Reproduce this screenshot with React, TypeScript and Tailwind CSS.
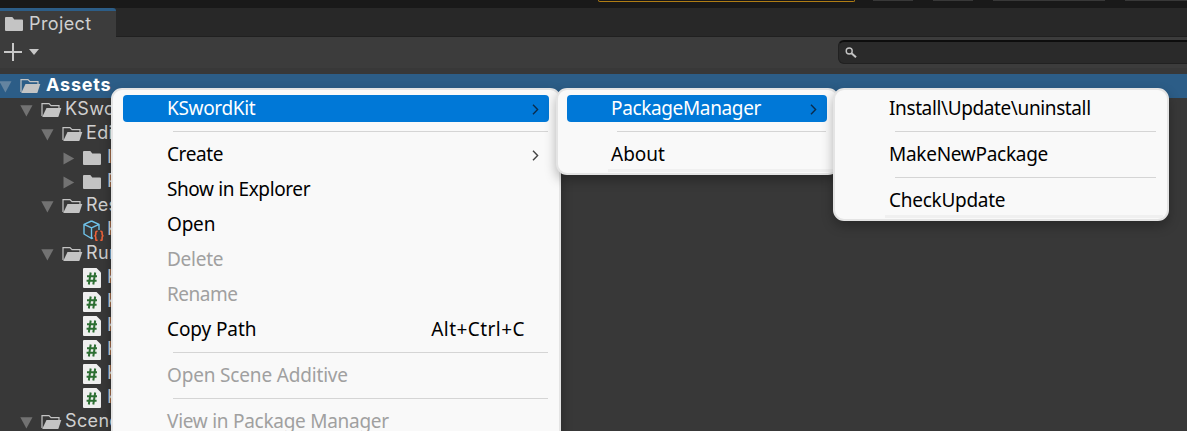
import React from "react";

type Entry =
  | { kind: "item"; label: string; track: string; shortcut?: string; sub?: boolean; active?: boolean; disabled?: boolean }
  | { kind: "sep" };

const mainMenu: Entry[] = [
  { kind: "item", label: "KSwordKit", track: "tracking-[-0.33px]", sub: true, active: true },
  { kind: "sep" },
  { kind: "item", label: "Create", track: "tracking-[-0.4px]", sub: true },
  { kind: "item", label: "Show in Explorer", track: "tracking-[-0.4px]" },
  { kind: "item", label: "Open", track: "tracking-[-0.2px]" },
  { kind: "item", label: "Delete", track: "tracking-[-0.25px]", disabled: true },
  { kind: "item", label: "Rename", track: "tracking-[-0.5px]", disabled: true },
  { kind: "item", label: "Copy Path", track: "tracking-[-0.1px]", shortcut: "Alt+Ctrl+C" },
  { kind: "sep" },
  { kind: "item", label: "Open Scene Additive", track: "tracking-[-0.17px]", disabled: true },
  { kind: "sep" },
  { kind: "item", label: "View in Package Manager", track: "tracking-[-0.27px]", disabled: true },
];

const packageMenu: Entry[] = [
  { kind: "item", label: "PackageManager", track: "tracking-[-0.36px]", sub: true, active: true },
  { kind: "sep" },
  { kind: "item", label: "About", track: "tracking-[0px]" },
];

const actionMenu: Entry[] = [
  { kind: "item", label: "Install\\Update\\uninstall", track: "tracking-[-0.38px]" },
  { kind: "sep" },
  { kind: "item", label: "MakeNewPackage", track: "tracking-[-0.28px]" },
  { kind: "sep" },
  { kind: "item", label: "CheckUpdate", track: "tracking-[-0.27px]" },
];

function Menu({ entries, className, strip }: { entries: Entry[]; className: string; strip?: boolean }) {
  return (
    <div
      className={`absolute top-[88px] rounded-[11px] border-2 border-[#e4e4e4] bg-[#f9f9f9] pt-px pr-[10px] pb-px shadow-[0_5px_12px_rgba(0,0,0,0.28)] ${className}`}
    >
      {strip && <div className="absolute right-[4px] bottom-[1px] left-[50px] h-[3px] bg-[#f0f0f0]" />}
      {entries.map((e, i) =>
        e.kind === "sep" ? (
          <div key={i} className="flex h-[11px] items-center pr-px pl-[50px]">
            <div className="h-px w-full bg-[#d5d5d5]" />
          </div>
        ) : (
          <div key={i} className="flex h-[35px] items-center">
            <div
              className={`flex h-[27px] w-full items-center justify-between rounded-[4px] pl-[44px] ${
                e.active ? "bg-[#0078d7] text-white" : e.disabled ? "text-[#a0a0a0]" : "text-black"
              }`}
            >
              <span className={e.track}>{e.label}</span>
              {e.shortcut && <span className="mr-[24px] tracking-[0.45px]">{e.shortcut}</span>}
              {e.sub && (
                <svg className="mt-px mr-[10px] h-[11px] w-[7px]" viewBox="0 0 7 11" fill="none">
                  <path d="M1 .8 5.6 5.5 1 10.2" stroke={e.active ? "#0b2d4c" : "#444"} strokeWidth="1.4" />
                </svg>
              )}
            </div>
          </div>
        ),
      )}
    </div>
  );
}

const OpenFolder = () => (
  <svg className="h-[16px] w-[21px] shrink-0" viewBox="0 0 21 16">
    <path d="M1 14V1.7h7l2 2h8V6" fill="none" stroke="#c4c4c4" strokeWidth="1.2" />
    <path d="M5.5 6H20.3L17.5 14.5Q17.2 15 16.6 15H1.2Z" fill="#c4c4c4" />
  </svg>
);
const Folder = () => (
  <svg className="h-[14px] w-[18px] shrink-0" viewBox="0 0 18 14">
    <path d="M0 1Q0 0 1 0H7.3L9.3 2.5H17Q18 2.5 18 3.5V13Q18 14 17 14H1Q0 14 0 13Z" fill="#c4c4c4" />
  </svg>
);
const Script = () => (
  <svg className="h-[20px] w-[18px] shrink-0" viewBox="0 0 18 20">
    <path d="M1 0H13.5L18 4.5V19Q18 20 17 20H1Q0 20 0 19V1Q0 0 1 0Z" fill="#efefef" />
    <path d="M7.7 4.5 5.8 16.5M12.2 4.5 10.3 16.5M4 8.2H14M3.6 12.8H13.6" stroke="#2c6e32" strokeWidth="2" fill="none" />
  </svg>
);
const Asmdef = () => (
  <svg className="h-[21px] w-[22px] shrink-0" viewBox="0 0 22 21">
    <path d="M8.5 1 16 4.3V10M8.5 1 1 4.3V14L8.5 18.5 10 17.8M1 4.3 8.5 7.8 16 4.3M8.5 7.8V18.5" fill="none" stroke="#6fc3ea" strokeWidth="1.4" strokeLinejoin="round" />
    <path d="M14.6 11.2h-.6q-1.2 0-1.2 1.2v1.8q0 1.3-1.3 1.6 1.3.3 1.3 1.6v1.8q0 1.2 1.2 1.2h.6M17.3 11.2h.6q1.2 0 1.2 1.2v1.8q0 1.3 1.3 1.6-1.3.3-1.3 1.6v1.8q0 1.2-1.2 1.2h-.6" fill="none" stroke="#ec6139" strokeWidth="1.6" />
  </svg>
);
const ArrowDown = ({ color = "#727272" }: { color?: string }) => (
  <svg className="mt-[2px] h-[12px] w-[13px] shrink-0" viewBox="0 0 13 12">
    <path d="M.3.2H12.5L6.4 11.5Z" fill={color} />
  </svg>
);
const ArrowRight = () => (
  <svg className="h-[13px] w-[13px] shrink-0" viewBox="0 0 13 13">
    <path d="M1.5.4V12.6L12.2 6.5Z" fill="#727272" />
  </svg>
);

type Row = { label: string; pad: string; icon: "open" | "folder" | "script" | "asmdef"; arrow?: "down" | "right" };
const rows: Row[] = [
  { label: "KSwordKit", pad: "pl-[20px]", icon: "open", arrow: "down" },
  { label: "Editor", pad: "pl-[41px]", icon: "open", arrow: "down" },
  { label: "Internal", pad: "pl-[62px]", icon: "folder", arrow: "right" },
  { label: "Packages", pad: "pl-[62px]", icon: "folder", arrow: "right" },
  { label: "Resources", pad: "pl-[41px]", icon: "open", arrow: "down" },
  { label: "KSwordKit", pad: "pl-[83px]", icon: "asmdef" },
  { label: "Runtime", pad: "pl-[41px]", icon: "open", arrow: "down" },
  { label: "KSword", pad: "pl-[83px]", icon: "script" },
  { label: "KSword", pad: "pl-[83px]", icon: "script" },
  { label: "KSword", pad: "pl-[83px]", icon: "script" },
  { label: "KSword", pad: "pl-[83px]", icon: "script" },
  { label: "KSword", pad: "pl-[83px]", icon: "script" },
  { label: "KSword", pad: "pl-[83px]", icon: "script" },
  { label: "Scenes", pad: "pl-[20px]", icon: "open", arrow: "down" },
];

export default function App() {
  return (
    <div className="relative flex h-[431px] w-[1187px] flex-col overflow-hidden bg-[#383838] font-['Noto_Sans',sans-serif]">
      <header className="flex h-[8px] shrink-0 items-start bg-[#191919]">
        <div className="ml-[598px] h-[2px] w-[257px] rounded-b-[2px] border-x border-b border-x-[#b07d14] border-b-[#b07d14]" />
        <div className="ml-[18px] h-px w-[40px] bg-[#383838]" />
        <div className="ml-[20px] h-px w-[40px] bg-[#383838]" />
        <div className="ml-[20px] h-px w-[112px] bg-[#383838]" />
        <div className="ml-[20px] h-px flex-1 bg-[#383838]" />
      </header>

      <div className="flex h-[29px] shrink-0 bg-[#282828]">
        <div className="flex w-[116px] items-center rounded-tr-[3px] border-t-[3px] border-[#2c5d87] bg-[#3c3c3c] pl-[5px] font-['Inter',sans-serif] text-[18px] text-[#d0d0d0]">
          <div className="-mt-px"><Folder /></div>
          <span className="-mt-px ml-[6px] leading-none tracking-[0.4px]">Project</span>
        </div>
        <div className="flex-1 border-b border-[#202020]" />
      </div>

      <div className="flex h-[31px] shrink-0 items-start bg-[#3c3c3c]">
        <svg className="mt-[6px] ml-[4px] h-[18px] w-[18px]" viewBox="0 0 18 18">
          <path d="M9 0V18M0 9H18" stroke="#c8c8c8" strokeWidth="2" />
        </svg>
        <svg className="mt-[12px] ml-[7px] h-[6px] w-[10px]" viewBox="0 0 10 6">
          <path d="M0 0H10L5 6Z" fill="#c8c8c8" />
        </svg>
        <div className="mt-[3px] -mr-2 ml-auto flex h-[24px] w-[357px] items-center rounded-[6px] border border-t-2 border-[#212121] border-t-[#0d0d0d] bg-[#2a2a2a] pl-[6px]">
          <svg className="h-[11px] w-[12px]" viewBox="0 0 12 11" fill="none" stroke="#c4c4c4">
            <circle cx="4.2" cy="4" r="3" strokeWidth="1.4" />
            <path d="M6.5 6.2 11 10.3" strokeWidth="2" />
          </svg>
        </div>
      </div>
      <div className="h-[6px] shrink-0 bg-[#383838]" />

      <div className="flex shrink-0 flex-col font-['Inter',sans-serif] text-[18px] tracking-[0.35px] text-[#d0d0d0]">
        <div className="flex h-[24px] items-center bg-[#2c5d87] font-bold text-white">
          <div className="-ml-px flex"><ArrowDown color="#6484a0" /></div>
          <div className="ml-[8px] flex"><OpenFolder /></div>
          <span className="-mt-[3px] ml-[5px] leading-none tracking-[0.8px]">Assets</span>
        </div>
        {rows.map((r, i) => (
          <div key={i} className={`flex h-[24px] w-[115px] items-center overflow-hidden whitespace-nowrap ${r.pad}`}>
            {r.arrow === "down" && <ArrowDown />}
            {r.arrow === "right" && <ArrowRight />}
            <div className={r.arrow ? "ml-[8px] flex" : "flex"}>
              {r.icon === "open" && <OpenFolder />}
              {r.icon === "folder" && <Folder />}
              {r.icon === "script" && <Script />}
              {r.icon === "asmdef" && <Asmdef />}
            </div>
            <span className={`-mt-[3px] leading-none ${r.icon === "open" ? "ml-[3px]" : r.icon === "asmdef" ? "ml-[2px]" : "ml-[6px]"}`}>
              {r.label}
            </span>
          </div>
        ))}
      </div>

      <div className="text-[19px] leading-none whitespace-nowrap">
        <Menu entries={mainMenu} className="left-[111px] w-[450px] pl-[10px]" />
        <Menu entries={packageMenu} className="left-[556px] w-[283px] pl-[9px]" strip />
        <Menu entries={actionMenu} className="left-[833px] w-[336px] pl-[10px]" strip />
      </div>
    </div>
  );
}
